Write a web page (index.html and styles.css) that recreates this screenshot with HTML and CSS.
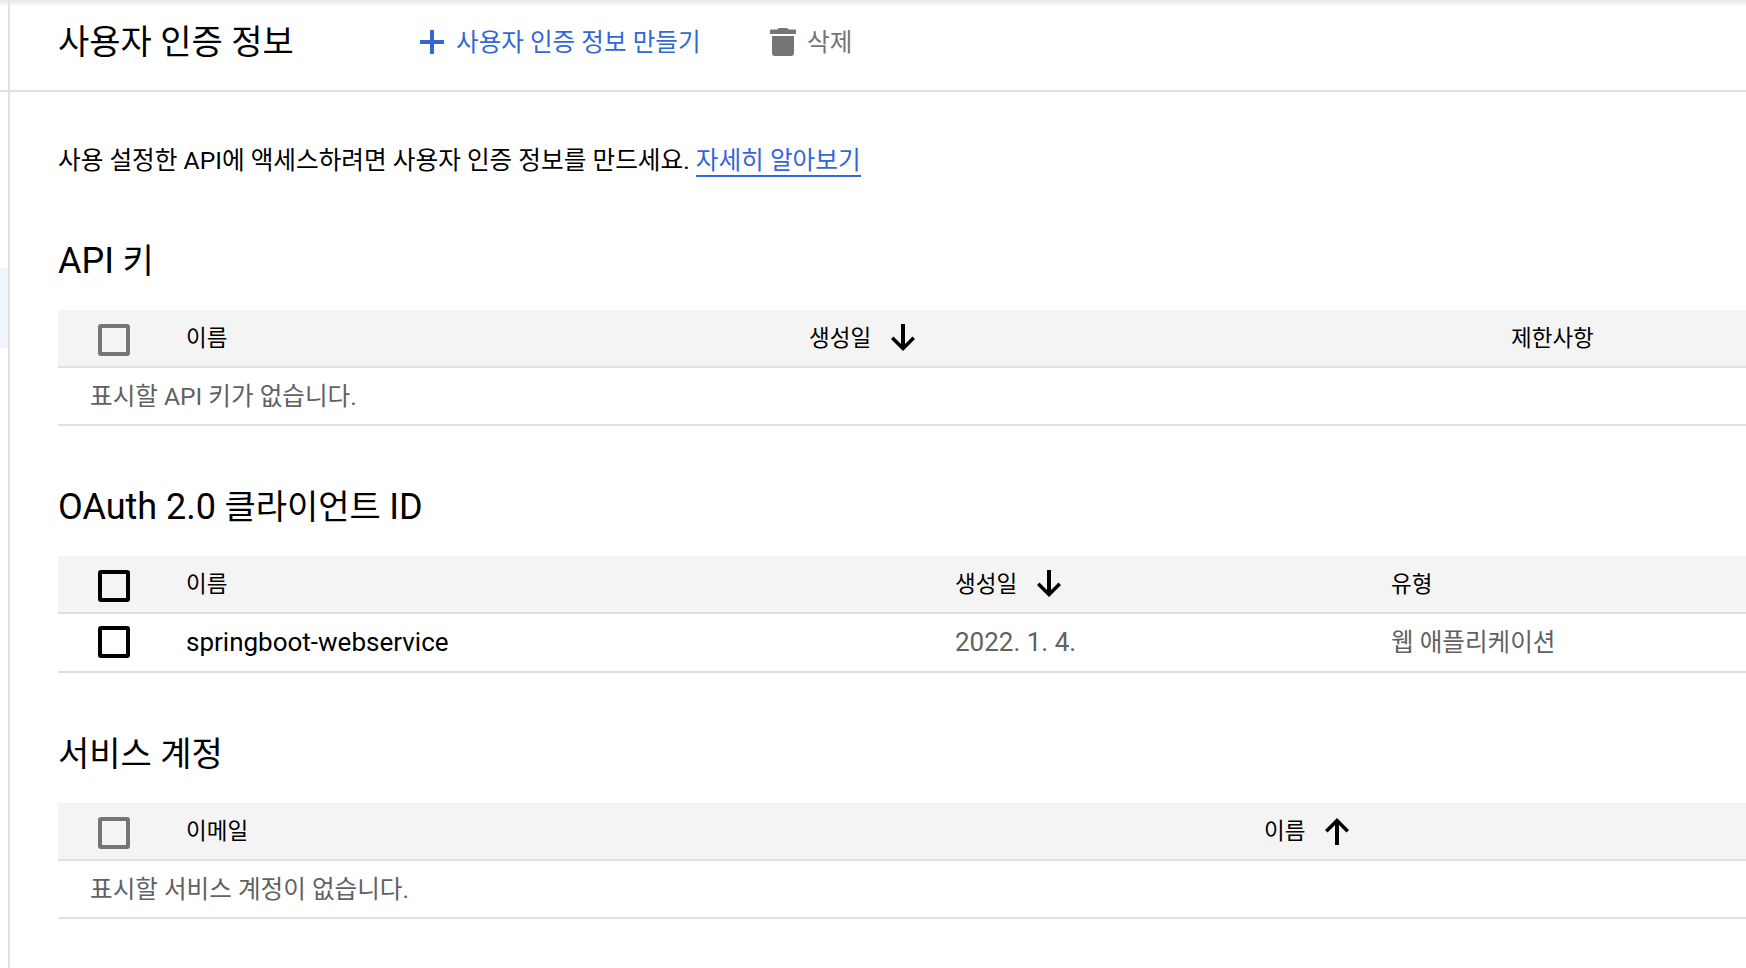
FILE: index.html
```html
<!DOCTYPE html>
<html lang="ko">
  <head>
    <meta charset="UTF-8" />
    <title>사용자 인증 정보</title>
    <link rel="stylesheet" href="styles.css">
  </head>
  <body>
    <div class="topbar">
      <h1>사용자 인증 정보</h1>
      <a class="action action-create">
        <svg width="24" height="24" viewBox="0 0 24 24"><path d="M10 0h4v10h10v4H14v10h-4V14H0v-4h10z" /></svg>
        <span>사용자 인증 정보 만들기</span>
      </a>
      <a class="action action-delete">
        <svg width="26" height="28" viewBox="0 0 26 28"><path d="M9 0h8l2 1.5h6a1 1 0 0 1 1 1V6H0V2.5a1 1 0 0 1 1-1h6zM2 8h22v17a3 3 0 0 1-3 3H5a3 3 0 0 1-3-3z" /></svg>
        <span>삭제</span>
      </a>
    </div>

    <div class="layout">
      <aside class="rail"><div class="rail-active"></div></aside>
      <main class="content">
        <p class="intro">
          사용 설정한 API에 액세스하려면 사용자 인증 정보를 만드세요.
          <a class="learn-more">자세히 알아보기</a>
        </p>

        <h2><span class="en">API</span> 키</h2>
        <div class="table table-api">
          <div class="row row-head">
            <span class="check-cell"><i class="check check-off"></i></span>
            <span>이름</span>
            <span class="sort">생성일
              <svg width="28" height="28" viewBox="0 0 28 28"><path d="M12 1h4v20l7.5-7.500 2.500 2.500-12 12L2 16l2.500-2.500L12 21z" /></svg>
            </span>
            <span>제한사항</span>
          </div>
          <div class="row row-empty">표시할 API 키가 없습니다.</div>
        </div>

        <h2><span class="en">OAuth 2.0</span> 클라이언트 <span class="en">ID</span></h2>
        <div class="table table-oauth">
          <div class="row row-head">
            <span class="check-cell"><i class="check"></i></span>
            <span>이름</span>
            <span class="sort">생성일
              <svg width="28" height="28" viewBox="0 0 28 28"><path d="M12 1h4v20l7.5-7.500 2.500 2.500-12 12L2 16l2.500-2.500L12 21z" /></svg>
            </span>
            <span>유형</span>
          </div>
          <div class="row row-body">
            <span class="check-cell"><i class="check"></i></span>
            <span class="name">springboot-webservice</span>
            <span class="date">2022. 1. 4.</span>
            <span class="muted">웹 애플리케이션</span>
          </div>
        </div>

        <h2>서비스 계정</h2>
        <div class="table table-service">
          <div class="row row-head">
            <span class="check-cell"><i class="check check-off"></i></span>
            <span>이메일</span>
            <span class="sort sort-up">이름
              <svg width="28" height="28" viewBox="0 0 28 28"><path d="M12 27h4V7l7.5 7.500 2.500-2.500L14 0 2 12l2.500 2.500L12 7z" /></svg>
            </span>
          </div>
          <div class="row row-empty">표시할 서비스 계정이 없습니다.</div>
        </div>
      </main>
    </div>
  </body>
</html>
```

FILE: styles.css
```css
* {
  box-sizing: border-box;
}
body {
  margin: 0;
  width: 1746px;
  height: 968px;
  overflow: hidden;
  font-family: Roboto, "Noto Sans CJK KR", sans-serif;
  color: #000;
  background-color: #fff;
  display: flex;
  flex-direction: column;
}
a {
  cursor: pointer;
}

.topbar {
  height: 92px;
  flex: none;
  display: flex;
  align-items: center;
  padding: 0 0 6px 58px;
  border-bottom: 2px solid #e0e0e0;
  background:
    linear-gradient(#e6e6e6, #ffffff00) 0 0 / 100% 7px no-repeat,
    linear-gradient(#e0e0e0, #e0e0e0) 8px 0 / 2px 100% no-repeat;
}
h1 {
  margin: 0;
  width: 362px;
  padding-bottom: 6px;
  font-size: 34px;
  font-weight: 400;
}
.action {
  display: flex;
  align-items: center;
  gap: 12px;
  font-size: 24.6px;
}
.action span {
  padding-bottom: 4px;
}
.action-create {
  color: #3367d6;
  width: 350px;
}
.action-create svg {
  fill: #3367d6;
}
.action-delete {
  color: #757575;
  gap: 11px;
}
.action-delete svg {
  fill: #757575;
}

.layout {
  flex: 1;
  display: flex;
}
.rail {
  width: 10px;
  flex: none;
  padding-top: 176px;
  border-right: 2px solid #e0e0e0;
}
.rail-active {
  height: 80px;
  background-color: #f1f5fe;
}
.content {
  flex: 1;
  padding-left: 48px;
}
.intro {
  margin: 47px 0 55px;
  font-size: 24.65px;
  line-height: 44px;
}
.learn-more {
  color: #3367d6;
  border-bottom: 2px solid #3367d6;
}
h2 {
  margin: 0 0 28px;
  height: 44px;
  font-size: 34px;
  line-height: 46px;
  font-weight: 400;
}
.en {
  font-size: 36px;
}
.table {
  margin-bottom: 58px;
  font-size: 22.5px;
}
.row {
  display: grid;
  align-items: center;
  height: 58px;
  border-bottom: 2px solid #e0e0e0;
}
.row-body {
  height: 59px;
  padding-bottom: 1px;
}
.row-head {
  background-color: #f4f4f4;
  padding-bottom: 5px;
}
.row-head .check-cell {
  padding-top: 9px;
}
.row-head svg {
  margin-top: 3px;
}
.row-head .sort-up svg {
  margin-top: 7px;
}
.row-empty {
  display: block;
  padding-left: 32px;
  line-height: 58px;
  font-size: 24.6px;
  color: #616161;
}
.table-api .row {
  grid-template-columns: 128px 623px 702px 1fr;
}
.table-oauth .row {
  grid-template-columns: 128px 769px 436px 1fr;
}
.table-service .row {
  grid-template-columns: 128px 1078px 1fr;
}
.check-cell {
  padding-left: 40px;
  display: flex;
}
.check {
  width: 32px;
  height: 32px;
  border: 4px solid #000;
  border-radius: 3px;
}
.check-off {
  border-color: #757575;
}
.sort {
  display: flex;
  align-items: center;
  gap: 18px;
}
.name {
  font-size: 26px;
}
.date {
  font-size: 26px;
  color: #616161;
}
.muted {
  font-size: 24.6px;
  color: #616161;
  padding-bottom: 4px;
}
```
